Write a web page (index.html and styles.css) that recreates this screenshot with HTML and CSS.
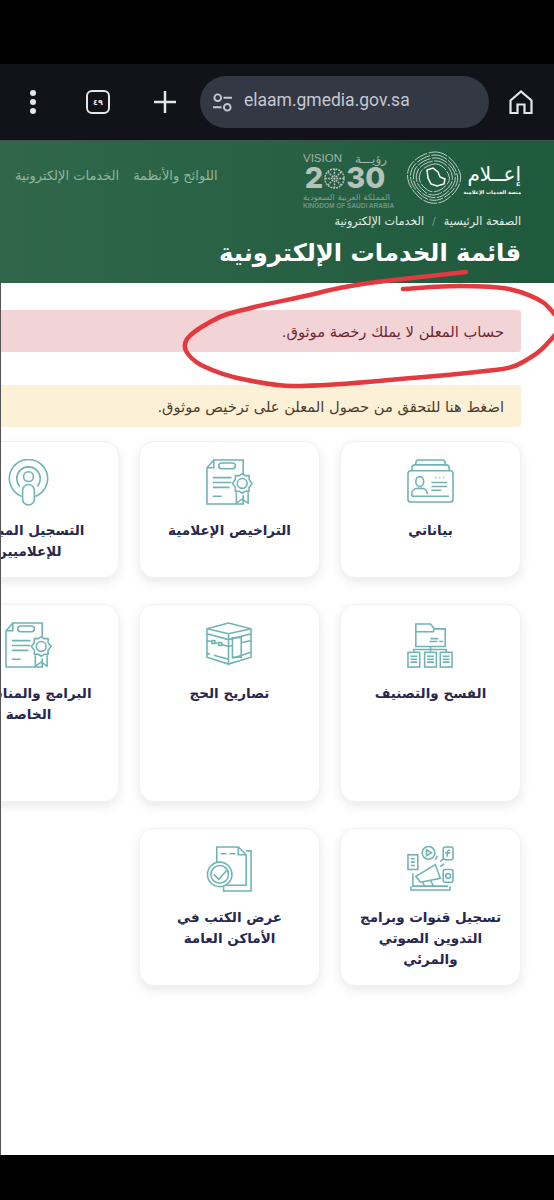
FILE: index.html
```html
<!DOCTYPE html>
<html lang="ar" dir="rtl">
<head>
    <meta charset="UTF-8">
    <meta name="viewport" content="width=device-width, initial-scale=1.0">
    <title>قائمة الخدمات الإلكترونية</title>
    <link rel="stylesheet" href="styles.css">
</head>
<body>
    <!-- shared icon shapes -->
    <svg class="defs" aria-hidden="true">
        <symbol id="icon-cert" viewBox="0 0 48 48">
            <path d="M8 1H38V15M38 37V46H1V9L8 1V9H1"/>
            <rect x="13" y="4" width="17" height="6" rx="3"/>
            <path d="M7 19H26M7 24H26M7 29H24M7 38H16"/>
            <path d="M37 15L40 17L44 17L44 21L47 25L44 29L44 33L40 33L37 35L34 33L30 33L30 29L27 25L30 21L30 17L34 17Z"/>
            <circle cx="37" cy="25" r="5"/>
            <path d="M31 34V45L37 41L43 45V34"/>
        </symbol>
    </svg>

    <div class="phone-top"></div>

    <div class="toolbar" dir="ltr">
        <div class="dots"><span></span><span></span><span></span></div>
        <div class="tabs">٤٩</div>
        <svg class="plus" viewBox="0 0 22 22"><path d="M11 0V22M0 11H22"/></svg>
        <div class="url">
            <svg class="tune" viewBox="0 0 22 22">
                <circle cx="6" cy="6" r="3.5"/><path d="M12 6H21M1 16H10"/><circle cx="16" cy="16" r="3.5"/>
            </svg>
            <span>elaam.gmedia.gov.sa</span>
        </div>
        <svg class="home" viewBox="0 0 24 24"><path d="M1.5 10.5L12 1.5L22.5 10.5V23H15.5V14.5H8.5V23H1.5Z"/></svg>
    </div>

    <header class="hero">
        <div class="hero-top">
            <div class="logos">
                <div class="elaam">
                    <div class="elaam-name">إعــلام</div>
                    <div class="elaam-sub">منصة الخدمات الإعلامية</div>
                </div>
                <svg class="map" viewBox="0 0 56 54">
                    <g class="rings">
                        <path d="M28 1C38 0 50 10 54 22C57 32 49 44 38 50C30 54 20 53 12 45C5 38 0 30 2 20C4 10 17 2 28 1Z"/>
                        <path d="M28 4C37 3 48 12 51 23C54 32 47 42 37 47C30 51 21 50 14 43C7 37 3 29 5 21C7 12 18 5 28 4Z"/>
                        <path d="M28 7C36 6 46 14 49 23C51 31 45 40 36 45C29 48 22 47 15 41C9 36 6 29 8 22C9 14 19 8 28 7Z"/>
                        <path d="M28 10C35 9 44 15 46 24C48 31 43 38 35 42C29 45 22 45 17 39C11 34 9 28 11 22C12 16 20 11 28 10Z"/>
                        <path d="M28 13C34 12 41 18 43 25C45 30 40 36 34 39C28 42 23 41 19 37C14 33 12 27 14 23C15 18 22 14 28 13Z"/>
                    </g>
                    <path class="ksa" d="M21 19L27 17L32 21L34 26L39 28L38 33L31 35L25 33L22 27Z"/>
                </svg>
                <div class="vision" dir="ltr">
                    <div class="vision-line"><span>VISION</span><span class="roya">رؤيـــة</span></div>
                    <div class="vision-num">2<svg class="emblem" viewBox="0 0 24 24"><circle cx="12" cy="12" r="10"/><path d="M12 2V22M2 12H22M5 5L19 19M19 5L5 19"/></svg>30</div>
                    <div class="vision-ar">المملكة العربية السعودية</div>
                    <div class="vision-en">KINGDOM OF SAUDI ARABIA</div>
                </div>
            </div>
            <nav class="hero-nav">
                <a>اللوائح والأنظمة</a>
                <a>الخدمات الإلكترونية</a>
            </nav>
        </div>
        <div class="crumbs">
            <span>الصفحة الرئيسية</span>
            <span class="sep">/</span>
            <span>الخدمات الإلكترونية</span>
        </div>
        <h1>قائمة الخدمات الإلكترونية</h1>
    </header>

    <main class="content">
        <div class="alert alert-red">حساب المعلن لا يملك رخصة موثوق.</div>
        <div class="alert alert-yellow">اضغط هنا للتحقق من حصول المعلن على ترخيص موثوق.</div>

        <div class="cards">
            <a class="card">
                <svg class="icon" viewBox="0 0 48 48">
                    <path d="M9 7V4Q9 1 12 1H36Q39 1 39 4V7M5 12V9Q5 6 8 6H40Q43 6 43 9V12"/>
                    <rect x="1" y="12" width="46" height="32" rx="3"/>
                    <ellipse cx="13" cy="23" rx="4" ry="5"/>
                    <path d="M5 38V35C5 31 9 30 11 30H15C19 30 20 32 21 36M5 38H43M25 24H41M25 28H41M25 32H35M29 19H30M33 19H34M37 19H38"/>
                </svg>
                <div class="card-title">بياناتي</div>
            </a>
            <a class="card">
                <svg class="icon"><use href="#icon-cert"/></svg>
                <div class="card-title">التراخيص الإعلامية</div>
            </a>
            <a class="card">
                <svg class="icon" viewBox="0 0 48 48">
                    <path d="M17 38.200A19.500 19.500 0 1 1 31 38.200"/>
                    <path d="M15 28A12 12 0 1 1 33 28"/>
                    <circle cx="24" cy="18" r="5"/>
                    <rect x="18" y="26" width="12" height="21" rx="6"/>
                </svg>
                <div class="card-title">التسجيل المباشر للإعلاميين</div>
            </a>

            <a class="card">
                <svg class="icon" viewBox="0 0 48 48">
                    <path d="M9 25V2H24L28 7H39V25ZM9 10H27L28 7M23 20H31M33 20H37M24 17H32"/>
                    <path d="M24 25V31M7 31V28H40V31"/>
                    <rect x="1" y="31" width="12" height="15"/>
                    <rect x="18" y="31" width="12" height="15"/>
                    <rect x="34" y="31" width="12" height="15"/>
                    <path d="M3.500 35H10.500M3.500 38H10.500M3.500 41H10.500M20.500 35H27.500M20.500 38H27.500M20.500 41H27.500M36.500 35H43.500M36.500 38H43.500M36.500 41H43.500"/>
                </svg>
                <div class="card-title">الفسح والتصنيف</div>
            </a>
            <a class="card">
                <svg class="icon" viewBox="0 0 48 48">
                    <path d="M1 7L23 1L46 7V36L23 43L1 36Z"/>
                    <path d="M1 7L23 12L46 7M23 12V43M1 12L23 18L46 12"/>
                    <path d="M1 19L5 20M9 21L12 22M16 23L23 25L27 24M37 21L46 19"/>
                    <rect x="27" y="16" width="9" height="20"/>
                    <path d="M1 32L4 33M8 34L23 38M27 37L46 31"/>
                    <rect x="6" y="19" width="3" height="3"/><rect x="13" y="21" width="3" height="3"/>
                </svg>
                <div class="card-title">تصاريح الحج</div>
            </a>
            <a class="card">
                <svg class="icon"><use href="#icon-cert"/></svg>
                <div class="card-title">البرامج والمناسبات الخاصة</div>
            </a>

            <a class="card">
                <svg class="icon" viewBox="0 0 48 48">
                    <rect x="1" y="9" width="10" height="15"/>
                    <path d="M4 13H8M4 16.500H8M4 20H8"/>
                    <circle cx="22" cy="7" r="6.500"/>
                    <path d="M20 4L25 7L20 10Z"/>
                    <rect x="37" y="1" width="10" height="13" rx="2"/>
                    <path d="M44 4C41 4 41 6 41 11M39 7H44"/>
                    <rect x="37" y="24" width="10" height="13" rx="2"/>
                    <circle cx="42" cy="30.500" r="2.500"/>
                    <path d="M6 28V41H42M4 41V45H44V41"/>
                    <path d="M9 31L29 19L34 33L14 37ZM16 37L18 41M24 35L27 41"/>
                    <path d="M29 14L31 10M34 21L38 18M34 16L38 12"/>
                </svg>
                <div class="card-title">تسجيل قنوات وبرامج التدوين الصوتي والمرئي</div>
            </a>
            <a class="card">
                <svg class="icon" viewBox="0 0 48 48">
                    <path d="M41 5H46V46H18V40"/>
                    <path d="M11 17V1H33L41 9V40H19M33 1V9H41"/>
                    <path d="M15 8H21M24 8H30"/>
                    <circle cx="14" cy="29" r="12.500"/>
                    <circle cx="14" cy="29" r="9"/>
                    <path d="M8 29L13 34L21 25"/>
                </svg>
                <div class="card-title">عرض الكتب في الأماكن العامة</div>
            </a>
        </div>
    </main>

    <div class="phone-bottom"></div>

    <!-- pen marks drawn over the screenshot -->
    <svg class="scribble" viewBox="0 0 554 1200">
        <path d="M466 272C440 275 410 278 385 281C360 284 340 287 318 293C290 300 268 303 247 309C230 313 222 315 212 321C200 328 192 332 187 339C184 344 184 347 186 351C190 358 194 361 201 365C215 372 230 377 247 380C262 383 278 386 293 386C325 386 357 383 389 380C425 377 460 374 495 370C507 369 515 367 523 362C532 357 540 352 546 345L556 334"/>
        <path d="M403 289C420 288 440 286 459 286C476 286 494 286 509 289C522 292 535 297 544 303C548 306 551 310 556 316"/>
    </svg>
</body>
</html>
```

FILE: styles.css
```css
* {
    box-sizing: border-box;
}

html, body {
    margin: 0;
    height: 1200px;
    overflow: hidden;
}

body {
    position: relative;
    display: flex;
    flex-direction: column;
    background: #000;
    font-family: "DejaVu Sans", sans-serif;
}

.defs {
    display: none;
}

.phone-top {
    height: 64px;
    background: #000;
}

.phone-bottom {
    height: 45px;
    background: #000;
}

/* browser bar */
.toolbar {
    height: 76px;
    flex: none;
    display: flex;
    align-items: center;
    padding: 0 21px 0 30px;
    background: #111318;
}

.dots {
    width: 7px;
    display: flex;
    flex-direction: column;
    gap: 3px;
}

.dots span {
    width: 6px;
    height: 6px;
    border-radius: 50%;
    background: #e6e6e8;
}

.tabs {
    width: 24px;
    height: 24px;
    margin-left: 49px;
    border: 2px solid #e6e6e8;
    border-radius: 6px;
    color: #e6e6e8;
    font-family: "Noto Sans", "DejaVu Sans", sans-serif;
    font-size: 8px;
    font-weight: 700;
    line-height: 20px;
    text-align: center;
}

.plus {
    width: 22px;
    height: 22px;
    margin-left: 44px;
    fill: none;
    stroke: #e6e6e8;
    stroke-width: 2.500;
}

.url {
    width: 289px;
    height: 52px;
    margin-left: 24px;
    padding-left: 12px;
    display: flex;
    align-items: center;
    gap: 11px;
    border-radius: 26px;
    background: #333845;
    color: #c5c8d0;
    font-family: Roboto, sans-serif;
    font-size: 17.500px;
    padding-bottom: 4px;
}

.tune {
    width: 21px;
    height: 21px;
    margin-top: 4px;
    fill: none;
    stroke: #c5c8d0;
    stroke-width: 2;
}

.home {
    width: 24px;
    height: 24px;
    margin-left: 20px;
    fill: none;
    stroke: #e6e6e8;
    stroke-width: 2.200;
}

/* green header */
.hero {
    height: 143px;
    flex: none;
    padding: 10px 33px 0 15px;
    background: linear-gradient(90deg, #30674a, #1f5a3d);
    border-top: 1px solid #44524b;
    color: #fff;
}

.hero-top {
    height: 62px;
    display: flex;
    justify-content: space-between;
}

.logos {
    display: flex;
    gap: 9px;
}

.elaam {
    width: 50px;
    padding-top: 11px;
    text-align: center;
}

.elaam-name {
    font-size: 20px;
    line-height: 24px;
    white-space: nowrap;
}

.elaam-sub {
    font-size: 5px;
    line-height: 12px;
    white-space: nowrap;
    font-weight: 700;
}

.map {
    width: 56px;
    height: 54px;
    fill: none;
    stroke: #e4ece7;
    stroke-width: .8;
}

.rings path {
    stroke-dasharray: 14 1.500;
}

.ksa {
    stroke: #fff;
    stroke-width: 1.500;
}

.vision {
    width: 84px;
    margin-right: 10px;
    color: #a3b3aa;
    font-family: "Liberation Sans", sans-serif;
    line-height: 1;
}

.vision-line {
    height: 15px;
    display: flex;
    justify-content: space-between;
    align-items: center;
    font-size: 11.500px;
    white-space: nowrap;
}

.roya {
    font-family: "DejaVu Sans", sans-serif;
    font-size: 12px;
}

.vision-num {
    height: 24px;
    display: flex;
    align-items: center;
    justify-content: center;
    font-family: Inter, sans-serif;
    font-size: 29px;
    line-height: 24px;
    font-weight: 800;
    color: #b4c2ba;
}

.emblem {
    width: 23px;
    height: 23px;
    fill: none;
    stroke: #b4c2ba;
    stroke-width: 1.500;
    stroke-dasharray: 2 1;
}

.vision-ar {
    margin-top: 2px;
    font-family: "DejaVu Sans", sans-serif;
    font-size: 8.500px;
    line-height: 10px;
    text-align: center;
    white-space: nowrap;
    opacity: .75;
}

.vision-en {
    font-size: 6.500px;
    line-height: 8px;
    font-weight: 700;
    text-align: center;
    white-space: nowrap;
    opacity: .6;
}

.hero-nav {
    display: flex;
    gap: 14px;
    padding-top: 16px;
    color: #8fb6a0;
    font-size: 13px;
    line-height: 18px;
    white-space: nowrap;
}

.crumbs {
    display: flex;
    gap: 8px;
    font-size: 11.200px;
    line-height: 18px;
    color: #e6eee9;
}

.crumbs .sep {
    opacity: .4;
}

.hero h1 {
    margin: 4px 0 0;
    font-size: 24.200px;
    line-height: 36px;
    font-weight: 700;
    white-space: nowrap;
}

/* white page */
.content {
    flex: 1;
    min-height: 0;
    padding: 27px 33px 0 0;
    background: #fff;
    border-left: 1px solid #555;
    overflow: hidden;
}

.alert {
    height: 42px;
    padding: 0 17px;
    display: flex;
    align-items: center;
    border-radius: 0 3px 3px 0;
    font-size: 14.700px;
    white-space: nowrap;
}

.alert-red {
    background: #f2d3d6;
    color: #6d2730;
}

.alert-yellow {
    margin-top: 33px;
    background: #fcf0d6;
    color: #4a3c28;
}

.cards {
    width: 583px;
    margin-top: 14px;
    display: grid;
    grid-template-columns: repeat(3, 181px);
    grid-template-rows: 137px 198px 158px;
    column-gap: 20px;
    row-gap: 26px;
}

.card {
    padding: 17px 12px 0;
    background: #fff;
    border: 1px solid #f2f2f3;
    border-radius: 15px;
    box-shadow: 0 4px 12px rgba(0, 0, 0, .09);
    text-align: center;
}

.icon {
    display: block;
    width: 47px;
    height: 47px;
    margin: 0 auto 14px;
    fill: none;
    stroke: #6fb3b4;
    stroke-width: 1.600;
}

.card-title {
    color: #28284f;
    font-size: 13.500px;
    line-height: 21px;
    font-weight: 700;
}

.scribble {
    position: absolute;
    top: 0;
    left: 0;
    width: 554px;
    height: 1200px;
    fill: none;
    stroke: #e23a3e;
    stroke-width: 4.500;
    stroke-linecap: round;
    pointer-events: none;
}
```
